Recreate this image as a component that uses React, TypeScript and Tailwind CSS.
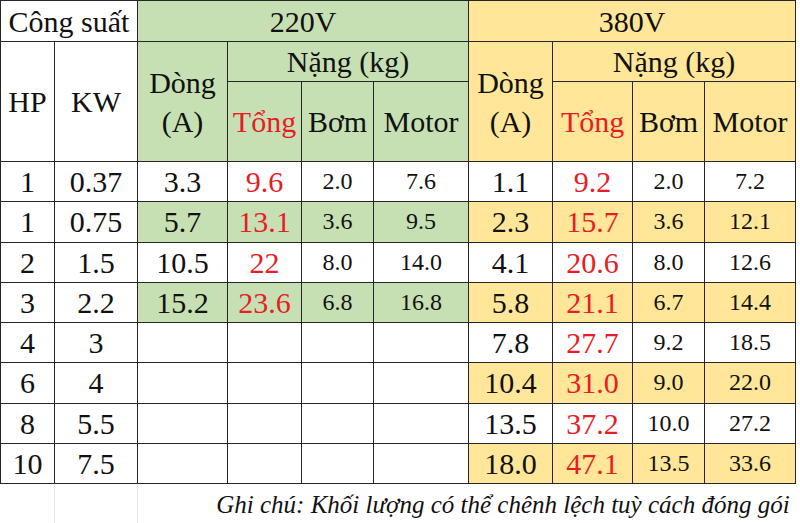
import React from "react";

const G = "bg-[#c6e0b4]";
const Y = "bg-[#ffe699]";
const RED = "text-[#e81c24]";

type Row = {
  hp: string;
  kw: string;
  a?: [string, string, string, string];
  b: [string, string, string, string];
};

const rows: Row[] = [
  { hp: "1", kw: "0.37", a: ["3.3", "9.6", "2.0", "7.6"], b: ["1.1", "9.2", "2.0", "7.2"] },
  { hp: "1", kw: "0.75", a: ["5.7", "13.1", "3.6", "9.5"], b: ["2.3", "15.7", "3.6", "12.1"] },
  { hp: "2", kw: "1.5", a: ["10.5", "22", "8.0", "14.0"], b: ["4.1", "20.6", "8.0", "12.6"] },
  { hp: "3", kw: "2.2", a: ["15.2", "23.6", "6.8", "16.8"], b: ["5.8", "21.1", "6.7", "14.4"] },
  { hp: "4", kw: "3", b: ["7.8", "27.7", "9.2", "18.5"] },
  { hp: "6", kw: "4", b: ["10.4", "31.0", "9.0", "22.0"] },
  { hp: "8", kw: "5.5", b: ["13.5", "37.2", "10.0", "27.2"] },
  { hp: "10", kw: "7.5", b: ["18.0", "47.1", "13.5", "33.6"] },
];

const cell =
  "border border-[#262626] text-center align-middle p-0 font-['Liberation_Serif','Times_New_Roman',serif]";

export default function App() {
  return (
    <div className="w-[800px] h-[523px] bg-white overflow-hidden text-[#111] font-['Liberation_Serif','Times_New_Roman',serif]">
      <table className="border-collapse table-fixed w-[795px] text-[#111] font-['Liberation_Serif','Times_New_Roman',serif]">
        <colgroup>
          <col className="w-[54px]" />
          <col className="w-[83px]" />
          <col className="w-[90px]" />
          <col className="w-[74px]" />
          <col className="w-[72px]" />
          <col className="w-[95px]" />
          <col className="w-[84px]" />
          <col className="w-[80px]" />
          <col className="w-[72px]" />
          <col className="w-[91px]" />
        </colgroup>
        <tbody className="text-[30px] leading-[39px]">
          <tr className="h-[41px]">
            <td colSpan={2} className={cell}>Công suất</td>
            <td colSpan={4} className={`${cell} ${G}`}>220V</td>
            <td colSpan={4} className={`${cell} ${Y}`}>380V</td>
          </tr>
          <tr className="h-[40px]">
            <td rowSpan={2} className={cell}>HP</td>
            <td rowSpan={2} className={cell}>KW</td>
            <td rowSpan={2} className={`${cell} ${G}`}>Dòng<br />(A)</td>
            <td colSpan={3} className={`${cell} ${G}`}>Nặng (kg)</td>
            <td rowSpan={2} className={`${cell} ${Y}`}>Dòng<br />(A)</td>
            <td colSpan={3} className={`${cell} ${Y}`}>Nặng (kg)</td>
          </tr>
          <tr className="h-[80px]">
            <td className={`${cell} ${G} ${RED}`}>Tổng</td>
            <td className={`${cell} ${G}`}>Bơm</td>
            <td className={`${cell} ${G}`}>Motor</td>
            <td className={`${cell} ${Y} ${RED}`}>Tổng</td>
            <td className={`${cell} ${Y}`}>Bơm</td>
            <td className={`${cell} ${Y}`}>Motor</td>
          </tr>
          {rows.map((r, i) => {
            const shade = i % 2 === 1;
            const ga = shade && r.a ? G : "";
            const yb = shade ? Y : "";
            return (
              <tr key={i} className={i % 2 === 0 ? "h-[40px]" : "h-[40.5px]"}>
                <td className={cell}>{r.hp}</td>
                <td className={cell}>{r.kw}</td>
                <td className={`${cell} ${ga}`}>{r.a ? r.a[0] : ""}</td>
                <td className={`${cell} ${ga} ${RED}`}>{r.a ? r.a[1] : ""}</td>
                <td className={`${cell} ${ga} text-[24px]`}>{r.a ? r.a[2] : ""}</td>
                <td className={`${cell} ${ga} text-[24px]`}>{r.a ? r.a[3] : ""}</td>
                <td className={`${cell} ${yb}`}>{r.b[0]}</td>
                <td className={`${cell} ${yb} ${RED}`}>{r.b[1]}</td>
                <td className={`${cell} ${yb} text-[24px]`}>{r.b[2]}</td>
                <td className={`${cell} ${yb} text-[24px]`}>{r.b[3]}</td>
              </tr>
            );
          })}
          <tr className="h-[40px]">
            <td className="p-0 border-r border-r-[#e4e4e4]"></td>
            <td className="p-0 border-r border-r-[#e4e4e4]"></td>
            <td
              colSpan={8}
              className="p-0 pr-[6px] pt-[2px] text-right italic text-[25px] leading-[30px] align-middle font-['Liberation_Serif','Times_New_Roman',serif]"
            >
              Ghi chú: Khối lượng có thể chênh lệch tuỳ cách đóng gói
            </td>
          </tr>
        </tbody>
      </table>
    </div>
  );
}
